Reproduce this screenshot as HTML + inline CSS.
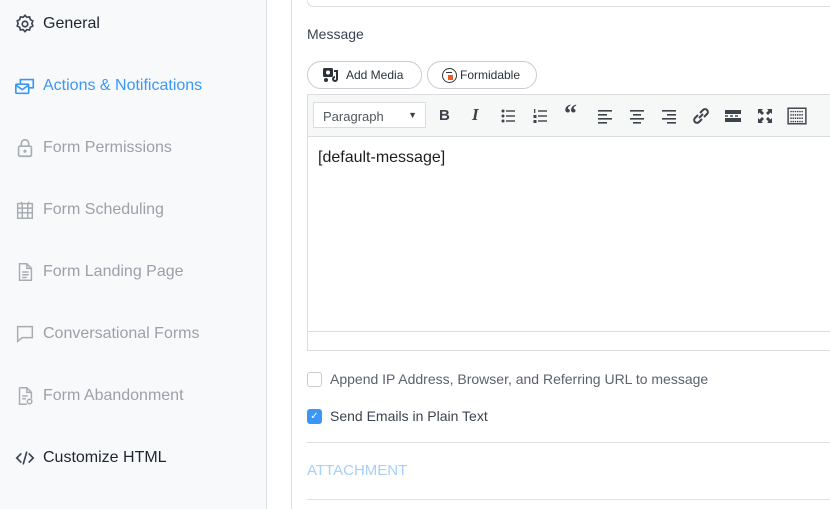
<!DOCTYPE html>
<html><head><style>
*{margin:0;padding:0;box-sizing:border-box}
body{width:830px;height:509px;overflow:hidden;background:#fff;font-family:"Liberation Sans",sans-serif;position:relative}
.side{position:absolute;left:0;top:0;width:267px;height:509px;background:#f8f9fb;border-right:1px solid #dcdfe6}
.item{position:absolute;left:14px;height:24px;display:flex;align-items:center;font-size:16px;color:#9ca0a8}
.item svg{width:22px;height:22px;margin-right:7px}
.vline{position:absolute;left:291px;top:0;width:1px;height:509px;background:#dcdfe6}
.txt{position:absolute;font-size:14px;color:#3c4250}
.btn{position:absolute;top:61px;height:28px;border:1px solid #c8ccd2;border-radius:14px;font-size:12px;color:#2c3338;display:flex;align-items:center;padding-left:14px;background:#fff}
.ed{position:absolute;left:307px;top:94px;width:530px;height:257px;border:1px solid #dcdcde}
.tb{height:42px;background:#f6f7f7;border-bottom:1px solid #dcdcde;position:relative}
.tb span{position:absolute;top:12px;font-size:15px;color:#3c434a;font-weight:bold}
.tb svg{position:absolute;top:12px;width:18px;height:18px}
</style></head><body>
<div class="side">
<div class="item" style="top:12px;color:#1e2530"><svg viewBox="0 0 24 24" fill="none" stroke="#3c4250" stroke-width="1.8"><circle cx="12" cy="12" r="3"/><path d="M12 2.5l2 2.2 3-.4.8 2.9 2.7 1.4-1 2.8 1 2.8-2.7 1.4-.8 2.9-3-.4-2 2.2-2-2.2-3 .4-.8-2.9-2.7-1.4 1-2.8-1-2.8 2.7-1.4.8-2.9 3 .4z"/></svg>General</div>
<div class="item" style="top:74px;color:#3b97f5"><svg viewBox="0 0 24 24" fill="none" stroke="#3b97f5" stroke-width="1.8"><rect x="2" y="10" width="14" height="10" rx="1"/><path d="M2 11l7 5 7-5M7 10V5h14v9h-5"/></svg>Actions &amp; Notifications</div>
<div class="item" style="top:136px"><svg viewBox="0 0 24 24" fill="none" stroke="#a8acb3" stroke-width="1.8"><rect x="5" y="10" width="14" height="11" rx="1.5"/><path d="M8 10V7a4 4 0 018 0v3"/><circle cx="12" cy="15.5" r=".8" fill="#a8acb3"/></svg>Form Permissions</div>
<div class="item" style="top:198px"><svg viewBox="0 0 24 24" fill="none" stroke="#a8acb3" stroke-width="1.6"><rect x="4" y="5" width="16" height="16"/><path d="M4 10h16M4 15h16M9 5v16M15 5v16M8 3v3M16 3v3"/></svg>Form Scheduling</div>
<div class="item" style="top:260px"><svg viewBox="0 0 24 24" fill="none" stroke="#a8acb3" stroke-width="1.6"><path d="M6 3h8l5 5v13H6z M14 3v5h5 M9 12h7M9 15h7M9 18h5"/></svg>Form Landing Page</div>
<div class="item" style="top:322px"><svg viewBox="0 0 24 24" fill="none" stroke="#a8acb3" stroke-width="1.6"><path d="M4 4h16v12H9l-5 4z"/></svg>Conversational Forms</div>
<div class="item" style="top:384px"><svg viewBox="0 0 24 24" fill="none" stroke="#a8acb3" stroke-width="1.6"><path d="M6 3h8l5 5v7M14 3v5h5M6 3v18h8M9 12h6M9 15h4"/><circle cx="17" cy="18" r="2.5"/></svg>Form Abandonment</div>
<div class="item" style="top:446px;color:#1e2530"><svg viewBox="0 0 24 24" fill="none" stroke="#3c4250" stroke-width="1.8"><path d="M8 7l-5 5 5 5M16 7l5 5-5 5M14 5l-4 14"/></svg>Customize HTML</div>
</div>
<div class="vline"></div>
<div style="position:absolute;left:307px;top:-10px;width:540px;height:17px;border:1px solid #dcdfe6;border-radius:6px"></div>
<div class="txt" style="left:307px;top:26px">Message</div>
<div class="btn" style="left:307px;width:115px"><svg width="18" height="18" viewBox="0 0 18 18" style="margin-right:6px"><rect x="1" y="2" width="10" height="9" rx="1.5" fill="#2c3338"/><circle cx="6" cy="6.5" r="2" fill="#fff"/><path d="M12 5h3v8a2 2 0 11-2-2" fill="none" stroke="#2c3338" stroke-width="2"/><circle cx="4" cy="14" r="2" fill="#2c3338"/></svg>Add Media</div>
<div class="btn" style="left:427px;width:110px;padding-left:14px"><span style="display:inline-block;width:15px;height:15px;border:1.5px solid #333;border-radius:50%;margin-right:3px;position:relative"><span style="position:absolute;left:3px;top:3px;width:6px;height:1.5px;background:#333"></span><span style="position:absolute;left:5px;top:6px;width:5px;height:5px;background:#f05a24"></span></span>Formidable</div>
<div class="ed">
<div class="tb">
<div style="position:absolute;left:5px;top:7px;width:113px;height:26px;border:1px solid #dcdcde;background:#fff;font-size:13px;color:#50575e;padding:6px 9px">Paragraph<span style="position:absolute;right:8px;top:7px;font-size:9px;color:#3c434a;font-weight:normal">▼</span></div>
<span style="left:131px">B</span><span style="left:164px;font-family:'Liberation Serif';font-style:italic;font-size:17px;top:10px">I</span>
<svg viewBox="0 0 18 18" style="left:192px" fill="#3c434a"><circle cx="3" cy="4" r="1.5"/><circle cx="3" cy="9" r="1.5"/><circle cx="3" cy="14" r="1.5"/><rect x="6" y="3.3" width="9" height="1.4"/><rect x="6" y="8.3" width="9" height="1.4"/><rect x="6" y="13.3" width="9" height="1.4"/></svg>
<svg viewBox="0 0 18 18" style="left:224px" fill="#3c434a"><rect x="6" y="3.3" width="9" height="1.4"/><rect x="6" y="8.3" width="9" height="1.4"/><rect x="6" y="13.3" width="9" height="1.4"/><rect x="2" y="2" width="1.3" height="4"/><rect x="1.5" y="8" width="3" height="3"/><rect x="1.5" y="13" width="3" height="3"/></svg>
<span style="left:256px;font-size:26px;top:4px;font-family:'Liberation Serif'">“</span>
<svg viewBox="0 0 18 18" style="left:288px" fill="#3c434a"><rect x="2" y="3" width="14" height="1.6"/><rect x="2" y="7" width="9" height="1.6"/><rect x="2" y="11" width="14" height="1.6"/><rect x="2" y="15" width="9" height="1.6"/></svg>
<svg viewBox="0 0 18 18" style="left:320px" fill="#3c434a"><rect x="2" y="3" width="14" height="1.6"/><rect x="5" y="7" width="8" height="1.6"/><rect x="2" y="11" width="14" height="1.6"/><rect x="5" y="15" width="8" height="1.6"/></svg>
<svg viewBox="0 0 18 18" style="left:352px" fill="#3c434a"><rect x="2" y="3" width="14" height="1.6"/><rect x="7" y="7" width="9" height="1.6"/><rect x="2" y="11" width="14" height="1.6"/><rect x="7" y="15" width="9" height="1.6"/></svg>
<svg viewBox="0 0 18 18" style="left:384px" fill="none" stroke="#3c434a" stroke-width="2"><path d="M8 6l3-3a2.8 2.8 0 014 4l-3 3M10 12l-3 3a2.8 2.8 0 01-4-4l3-3M7 11l4-4"/></svg>
<svg viewBox="0 0 18 18" style="left:416px" fill="#3c434a"><rect x="1" y="3" width="16" height="4"/><rect x="1" y="11" width="16" height="4"/><rect x="1" y="8.3" width="3" height="1.4"/><rect x="6" y="8.3" width="3" height="1.4"/><rect x="11" y="8.3" width="3" height="1.4"/></svg>
<svg viewBox="0 0 18 18" style="left:448px" fill="#3c434a"><path d="M2 2h5L5.5 3.5 8 6 6 8 3.5 5.5 2 7zM16 2v5l-1.5-1.5L12 8 10 6l2.5-2.5L11 2zM2 16v-5l1.5 1.5L6 10l2 2-2.5 2.5L7 16zM16 16h-5l1.5-1.5L10 12l2-2 2.5 2.5L16 11z"/></svg>
<svg viewBox="0 0 18 18" style="left:479px;width:20px;height:20px;top:11px" fill="none" stroke="#3c434a" stroke-width="1.3"><rect x="1" y="2" width="16" height="14"/><path d="M3 5h12M3 8h12M3 11h12M3 14h12" stroke-dasharray="1.3 .7"/></svg>
</div>
<div style="padding:12px 10px;font-size:16px;color:#1e1e1e">[default-message]</div>
<div style="position:absolute;left:0;top:236px;width:100%;border-top:1px solid #dcdcde"></div>
</div>
<div style="position:absolute;left:307px;top:372px;width:15px;height:15px;border:1px solid #c8ccd2;border-radius:3px"></div>
<div class="txt" style="left:330px;top:371px;color:#5b616e">Append IP Address, Browser, and Referring URL to message</div>
<div style="position:absolute;left:307px;top:409px;width:15px;height:15px;background:#3b97f5;border-radius:3px;color:#fff;font-size:10px;text-align:center;line-height:15px">✓</div>
<div class="txt" style="left:330px;top:408px">Send Emails in Plain Text</div>
<div style="position:absolute;left:307px;top:442px;width:530px;border-top:1px solid #dcdfe6"></div>
<div style="position:absolute;left:307px;top:462px;font-size:15px;color:#a6cffb">ATTACHMENT</div>
<div style="position:absolute;left:307px;top:499px;width:530px;border-top:1px solid #dcdfe6"></div>
</body></html>
